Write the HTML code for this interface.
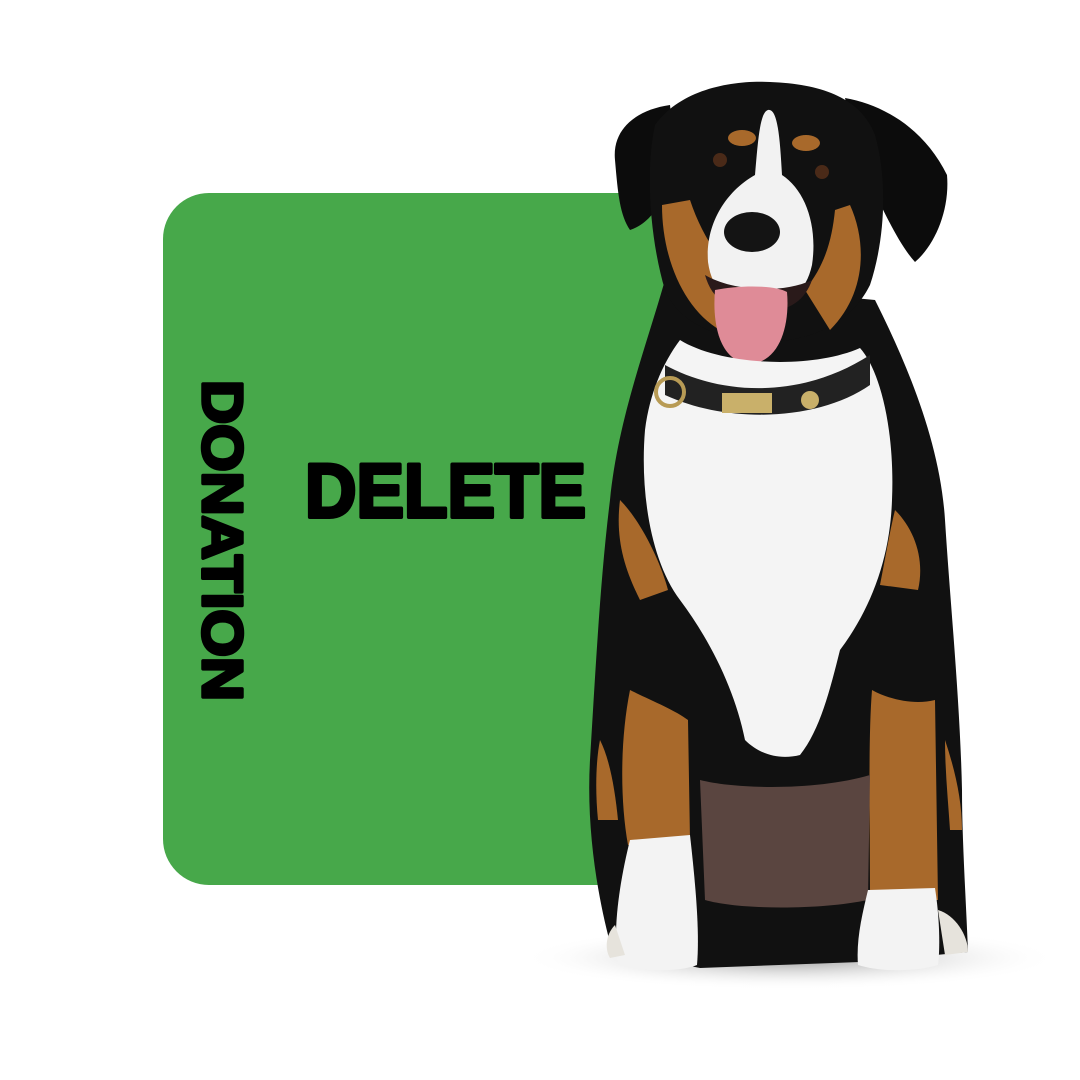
<!DOCTYPE html>
<html><head><meta charset="utf-8"><style>
html,body{margin:0;padding:0;background:#fff;}
svg{display:block}
</style></head><body>
<svg width="1080" height="1080" viewBox="0 0 1080 1080" xmlns="http://www.w3.org/2000/svg">
<defs>
<radialGradient id="sh" cx="0.5" cy="0.5" r="0.5">
<stop offset="0" stop-color="#8a8a8a" stop-opacity="0.9"/>
<stop offset="1" stop-color="#ffffff" stop-opacity="0"/>
</radialGradient>
</defs>
<rect x="163" y="193" width="537" height="692" rx="46" fill="#47a84a"/>
<text x="305" y="517" font-family="Liberation Sans, sans-serif" font-weight="bold" font-size="76" textLength="281" lengthAdjust="spacingAndGlyphs" fill="#000" stroke="#000" stroke-width="4" stroke-linejoin="round">DELETE</text>
<text transform="translate(203,380) rotate(90)" x="0" y="0" font-family="Liberation Sans, sans-serif" font-weight="bold" font-size="57" textLength="321" lengthAdjust="spacingAndGlyphs" fill="#000" stroke="#000" stroke-width="3.5" stroke-linejoin="round">DONATION</text>
<!-- shadow -->
<ellipse cx="790" cy="958" rx="270" ry="32" fill="url(#sh)"/>
<!-- body -->
<path d="M665 280 C645 350 618 420 610 500 C600 580 595 680 590 760 C586 830 598 900 612 950 L700 968 L860 962 L968 952 C966 900 962 840 962 790 C960 700 950 600 945 520 C940 440 905 360 875 300 Z" fill="#111"/>
<!-- ears -->
<path d="M670 105 C635 110 612 130 615 160 C618 195 620 215 630 230 C655 222 672 190 675 150 Z" fill="#0c0c0c"/>
<path d="M845 98 C885 105 925 130 947 175 C950 210 935 245 915 262 C895 240 880 200 862 170 Z" fill="#0c0c0c"/>
<!-- head -->
<path d="M655 125 C680 90 730 80 770 82 C825 84 862 100 875 135 C888 180 885 240 870 285 C850 325 810 340 770 342 C720 340 680 325 665 290 C650 240 645 170 655 125 Z" fill="#111"/>
<!-- tan cheeks -->
<path d="M662 205 C662 260 685 310 720 330 L735 275 C715 255 700 230 690 200 Z" fill="#a8692b"/>
<path d="M850 205 C868 245 865 295 830 330 L805 290 C825 265 832 240 835 210 Z" fill="#a8692b"/>
<ellipse cx="742" cy="138" rx="14" ry="8" fill="#a8692b"/>
<ellipse cx="806" cy="143" rx="14" ry="8" fill="#a8692b"/>
<!-- white blaze -->
<path d="M768 110 C778 108 780 140 782 175 C805 190 818 225 812 265 C806 292 790 305 762 307 C730 305 712 292 708 262 C705 222 728 190 755 175 C758 140 760 112 768 110 Z" fill="#f2f2f2"/>
<!-- eyes -->
<circle cx="720" cy="160" r="7" fill="#4a2a18"/>
<circle cx="822" cy="172" r="7" fill="#4a2a18"/>
<!-- nose -->
<ellipse cx="752" cy="232" rx="28" ry="20" fill="#141414"/>
<!-- mouth -->
<path d="M705 275 C730 290 780 295 812 280 C805 300 790 312 760 312 C730 312 712 300 705 275 Z" fill="#2a1a1a"/>
<!-- tongue -->
<path d="M715 290 C740 285 775 285 787 292 C790 325 780 362 750 364 C720 362 712 325 715 290 Z" fill="#df8b97"/>
<!-- white neck/chest -->
<path d="M680 340 C720 365 810 370 860 348 C880 370 895 430 892 500 C890 560 870 610 840 650 C830 690 820 730 800 755 C780 760 760 755 745 740 C735 690 710 640 680 600 C650 560 640 490 645 430 C650 390 665 360 680 340 Z" fill="#f4f4f4"/>
<!-- collar -->
<path d="M665 365 C720 395 800 400 870 355 L870 385 C820 420 730 425 665 395 Z" fill="#222"/>
<rect x="722" y="393" width="50" height="20" fill="#c9b06a"/>
<circle cx="810" cy="400" r="9" fill="#c9b06a"/>
<circle cx="670" cy="392" r="14" fill="none" stroke="#b89b55" stroke-width="4"/>
<!-- tan shoulders -->
<path d="M620 500 C640 520 660 560 668 590 L640 600 C625 570 615 540 620 500 Z" fill="#a8692b"/>
<path d="M895 510 C915 530 925 560 918 590 L880 585 C885 560 890 530 895 510 Z" fill="#a8692b"/>
<!-- legs -->
<path d="M630 690 C650 700 675 710 688 720 L690 840 L628 845 C620 800 620 740 630 690 Z" fill="#a8692b"/>
<path d="M872 690 C890 700 915 705 935 700 L938 900 L870 900 C870 820 868 740 872 690 Z" fill="#a8692b"/>
<path d="M600 740 C610 760 615 790 618 820 L598 820 C595 790 596 760 600 740 Z" fill="#a8692b"/>
<path d="M945 740 C955 770 962 800 962 830 L950 830 C948 800 945 770 945 740 Z" fill="#a8692b"/>
<!-- belly -->
<path d="M700 780 C740 790 820 790 870 775 L868 900 C820 910 740 910 705 900 Z" fill="#5a4540"/>
<!-- paws -->
<path d="M630 840 L690 835 C695 880 700 930 697 965 C680 972 640 972 618 965 C612 930 620 880 630 840 Z" fill="#f3f3f3"/>
<path d="M868 890 L935 888 C940 920 940 950 938 965 C915 972 880 972 858 965 C856 940 862 915 868 890 Z" fill="#f3f3f3"/>
<path d="M938 910 C955 915 968 935 968 952 L945 955 Z" fill="#e6e3dc"/>
<path d="M615 925 C605 935 605 950 610 958 L625 955 Z" fill="#e6e3dc"/>
</svg>
</body></html>
